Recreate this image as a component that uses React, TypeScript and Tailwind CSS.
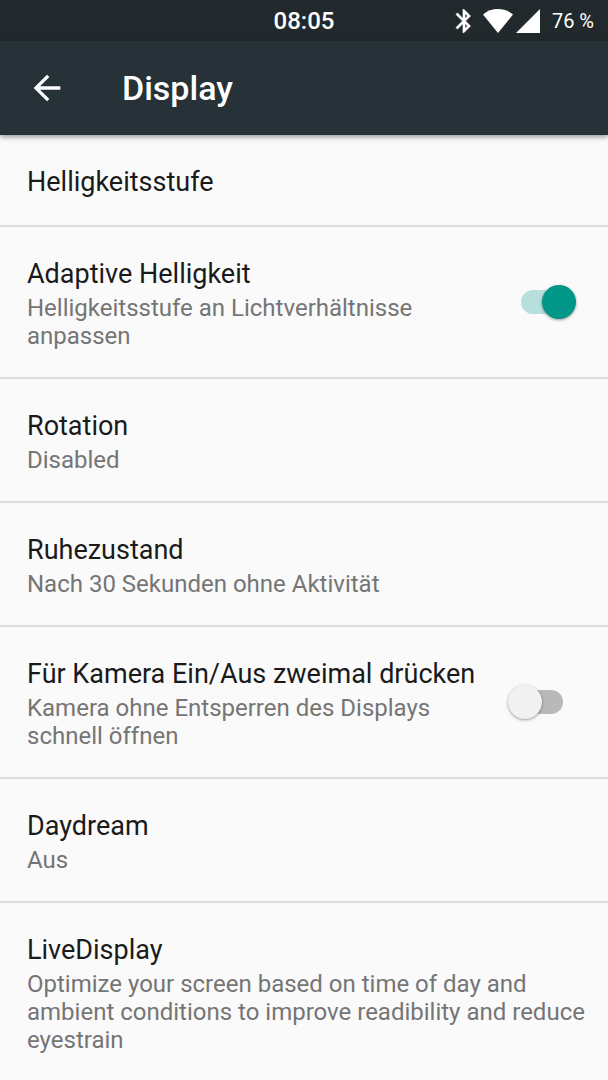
import { useState } from "react";

type Setting = { title: string; summary?: string; toggle?: boolean; on?: boolean };

const settings: Setting[] = [
  { title: "Helligkeitsstufe" },
  { title: "Adaptive Helligkeit", summary: "Helligkeitsstufe an Lichtverhältnisse anpassen", toggle: true, on: true },
  { title: "Rotation", summary: "Disabled" },
  { title: "Ruhezustand", summary: "Nach 30 Sekunden ohne Aktivität" },
  { title: "Für Kamera Ein/Aus zweimal drücken", summary: "Kamera ohne Entsperren des Displays schnell öffnen", toggle: true, on: false },
  { title: "Daydream", summary: "Aus" },
  { title: "LiveDisplay", summary: "Optimize your screen based on time of day and ambient conditions to improve readibility and reduce eyestrain" },
];

function StatusBar() {
  return (
    <div className="grid h-[41px] grid-cols-[1fr_auto_1fr] items-center bg-[#22292c] px-3.5 text-white">
      <span />
      <span className="text-2xl font-medium">08:05</span>
      <div className="flex items-center justify-end">
        <svg className="h-7 w-7" viewBox="0 0 24 24" fill="currentColor" stroke="currentColor" strokeWidth="0.3" aria-label="Bluetooth">
          <path d="M17.71 7.71L12 2h-1v7.59L6.41 5 5 6.41 10.59 12 5 17.59 6.41 19 11 14.41V22h1l5.71-5.71-4.3-4.29 4.3-4.29zM13 5.83l1.88 1.88L13 9.59V5.83zm1.88 10.46L13 18.17v-3.76l1.88 1.88z" />
        </svg>
        <svg className="ml-1 h-6 w-8" viewBox="0 0 32 24" fill="currentColor" aria-label="WLAN">
          <path d="M1 5.500C9.500-1.800 22.500-1.800 31 5.500L16 24Z" />
        </svg>
        <svg className="ml-0.5 h-6 w-6" viewBox="0 0 24 24" fill="currentColor" aria-label="Signal">
          <path d="M0 24L24 0V24Z" />
        </svg>
        <span className="ml-3 text-xl">76 %</span>
      </div>
    </div>
  );
}

function SettingRow({ title, summary, toggle, on }: Setting) {
  const [checked, setChecked] = useState(Boolean(on));
  const text = (
    <span className="min-w-0 flex-1 pt-1">
      <span className="block text-[27px] leading-8 text-[#1a1a1a]">{title}</span>
      {summary && <span className="mt-1 block text-[24px] leading-7 text-[#757575]">{summary}</span>}
    </span>
  );
  const box = "flex w-full items-center py-[27px] pr-4 pl-[27px] text-left";
  return (
    <li className="border-b-2 border-[#dddddd] last:border-b-0">
      {toggle ? (
        <label className={box + " cursor-pointer"}>
          {text}
          <span className="relative mr-4 ml-4 flex h-9 w-[68px] shrink-0 items-center justify-center">
            <input
              type="checkbox"
              role="switch"
              checked={checked}
              onChange={(e) => setChecked(e.target.checked)}
              className="peer h-6 w-[42px] appearance-none rounded-full bg-[#b9b9b9] checked:bg-[#b7dfdb]"
            />
            <span className="pointer-events-none absolute left-0 size-[34px] rounded-full bg-[#f1f1f1] shadow-[0_1px_3px_rgba(0,0,0,0.4)] peer-checked:left-auto peer-checked:right-0 peer-checked:bg-[#009688]" />
          </span>
        </label>
      ) : (
        <button type="button" className={box}>{text}</button>
      )}
    </li>
  );
}

export default function App() {
  return (
    <div className="min-h-screen bg-[#fafafa] font-['Roboto',sans-serif]">
      <StatusBar />
      <header className="relative flex h-[94px] items-center bg-[#263238] px-[27px] text-white shadow-[0_2px_5px_rgba(0,0,0,0.4)]">
        <button type="button" aria-label="Zurück" className="flex size-10 items-center justify-center">
          <svg className="size-10" viewBox="0 0 24 24" fill="currentColor">
            <path d="M20 11H7.830l5.590-5.590L12 4l-8 8 8 8 1.410-1.410L7.830 13H20v-2z" />
          </svg>
        </button>
        <h1 className="ml-[55px] text-[34px] font-medium">Display</h1>
      </header>
      <ul>
        {settings.map((s) => (
          <SettingRow key={s.title} {...s} />
        ))}
      </ul>
    </div>
  );
}
